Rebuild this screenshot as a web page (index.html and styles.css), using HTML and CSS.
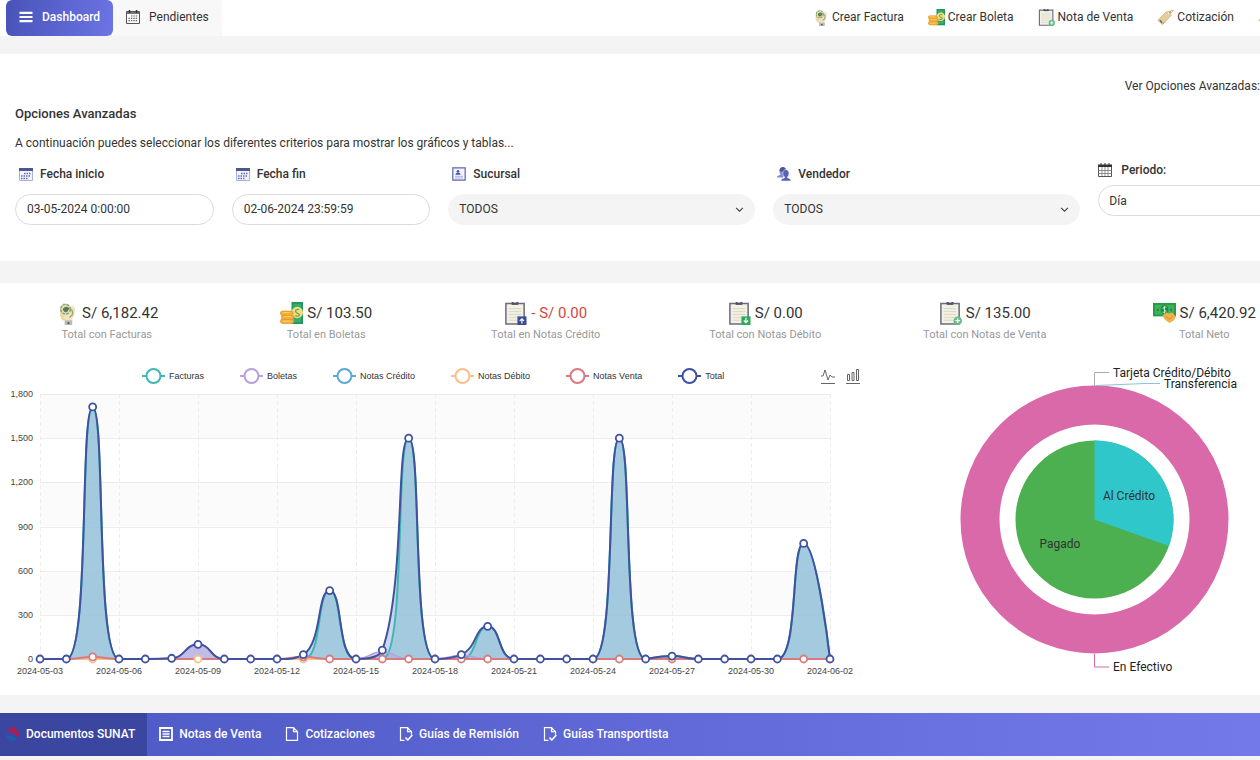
FILE: index.html
```html
<!DOCTYPE html>
<html lang="es">
<head>
<meta charset="utf-8">
<meta name="viewport" content="width=device-width, initial-scale=1">
<title>Dashboard</title>
<link rel="stylesheet" href="styles.css">
</head>
<body>
<svg class="sprite" aria-hidden="true">
  <symbol id="i-factura" viewBox="0 0 24 24">
    <path d="M7 18L5 12 6 4 9 1l3 1 4 3 3-1 2 3-1 7-3 5H9z" fill="#f1e3bd"/>
    <path d="M6 8l-1 6 3 5h3l-2-4z" fill="#efd5a8"/>
    <circle cx="11" cy="7.500" r="5" fill="#dbe5c4" stroke="#8ba06a" stroke-width="1.500" stroke-dasharray="3 1"/>
    <path d="M8 8c1-4 6-4 7-1l-2 3c-1 1-3 1-4-1" fill="#5c7a52"/>
    <path d="M16 7c4 3 3 7-1 9" fill="none" stroke="#a0a67c" stroke-width="1.500"/>
    <path d="M10 19h8v5h-8z" fill="#b9b9b5"/><path d="M13 21h2v2h-2z" fill="#555"/>
  </symbol>
  <symbol id="i-boleta" viewBox="0 0 24 24">
    <path d="M12 0h12v23H12z" fill="#21975b"/><path d="M14 2h8v19h-8z" fill="#38ad6d"/>
    <circle cx="18" cy="11" r="6" fill="#f3dd83"/>
    <path d="M20 8c-3-1-5 1-3 3s4 1 3 3c-1 1-3 1-4 0" fill="none" stroke="#78a854" stroke-width="1.500"/>
    <g fill="#f3b03c" stroke="#df9427" stroke-width=".8"><rect x=".5" y="17.500" width="14" height="5" rx="2.500"/><rect x="1.500" y="13.500" width="13" height="4.500" rx="2"/><rect x=".5" y="9.500" width="13" height="4.500" rx="2"/></g>
    <path d="M3 11h7M4 15h8M3 20h8" stroke="#ffd467"/>
  </symbol>
  <symbol id="i-clip" viewBox="0 0 24 24">
    <path d="M2 1.500h19v21.500H2z" fill="#f3f1e6" stroke="#6b6e7c" stroke-width="1.600"/>
    <path d="M8 0h7v3H8z" fill="#4e5264"/><path d="M10 0h3v1h-3z" fill="#b8bac6"/>
    <path d="M5 7h13M5 10h13M5 13h13M5 16h11M5 19h9" stroke="#d8d5bd"/>
  </symbol>
  <symbol id="i-nota" viewBox="0 0 24 24"><use href="#i-clip"/><circle cx="19.500" cy="19.500" r="4.500" fill="#66bd85"/><path d="M19.500 17v5M17 19.500h5" stroke="#fff" stroke-width="1.300"/></symbol>
  <symbol id="i-credito" viewBox="0 0 24 24"><use href="#i-clip"/><path d="M14 15h9.500v9H14z" fill="#3c4c94"/><path d="M18.700 22.500v-5m-2.200 2.200l2.200-2.200 2.200 2.200" fill="none" stroke="#fff" stroke-width="1.200"/></symbol>
  <symbol id="i-debito" viewBox="0 0 24 24"><use href="#i-clip"/><path d="M14 15h9.500v9H14z" fill="#2fa75c"/><path d="M18.700 16.500v5m-2.200-2.200l2.200 2.200 2.200-2.200" fill="none" stroke="#fff" stroke-width="1.200"/></symbol>
  <symbol id="i-tag" viewBox="0 0 24 24">
    <path d="M1 16L13 4l6-1 1 6L8 22z" fill="#e6cda0" stroke="#cdb184"/><path d="M4 19l4 3 4-4" fill="#c9ae7e"/>
    <circle cx="17" cy="6" r="1.500" fill="#fff"/><path d="M17 6c2-4 4-5 6-4-1 2-3 3-6 4" fill="none" stroke="#a98c61"/>
    <path d="M4 16l3 3" stroke="#76664a" stroke-width="2"/>
  </symbol>
  <symbol id="i-neto" viewBox="0 0 24 24">
    <path d="M0 1h24v14H0z" fill="#28994a"/><path d="M2 3h20v10H2z" fill="#3bb35c"/>
    <ellipse cx="12" cy="8" rx="4" ry="5" fill="#1d8a3e"/><path d="M14 5.500c-3-1-5 1-2 2.500s1 3.500-2 2.500M12 4v8" fill="none" stroke="#c9ecc3"/>
    <path d="M5 7v2M19 7v2" stroke="#1d8a3e" stroke-width="2"/>
    <path d="M10 14l4-3 3 1 3-1 4 4-2 4-5 3-5-4z" fill="#f2b14a"/><path d="M13 15l4 3 4-3" fill="none" stroke="#d98a2b"/>
  </symbol>
  <symbol id="i-cal" viewBox="0 0 14 14">
    <path d="M.5 2.500h13v11H.5z" fill="#fff" stroke="#555"/><path d="M0 1.500h14v2.500H0z" fill="#333"/><path d="M3 0v3M7 0v3M11 0v3" stroke="#333"/>
    <path d="M.5 7.500h13M.5 10.500h13M4 4v9M7 4v9M10 4v9" stroke="#777" stroke-width=".8"/>
  </symbol>
  <symbol id="i-month" viewBox="0 0 14 14">
    <path d="M.5 1.500h13v12H.5z" fill="#fafafa" stroke="#555"/><path d="M1 2h12v2H1z" fill="#777"/><path d="M3.500 0v3M10.500 0v3" stroke="#333" stroke-width="1.500"/>
    <path d="M5 6h7M2.500 8.300h9.500M2.500 10.600h9" stroke="#666" stroke-width="1.200" stroke-dasharray="1.400 1"/>
  </symbol>
  <symbol id="i-date" viewBox="0 0 14 14">
    <path d="M.5 1.500h13v12H.5z" fill="#f4f5fc" stroke="#a9b0dd"/><path d="M0 1h14v3H0z" fill="#4c568f"/>
    <path d="M5 6.500h7M2 9h10M2 11.500h7" stroke="#5c68ba" stroke-width="1.400" stroke-dasharray="1.500 1"/>
  </symbol>
  <symbol id="i-card" viewBox="0 0 14 14">
    <path d="M.8 .8h12.400v12.400H.8z" fill="#f2f4fd" stroke="#5b67aa" stroke-width="1.200"/><circle cx="6" cy="4.300" r="1.300" fill="#4655ab"/><path d="M3.500 7.800c0-3 5-3 5 0z" fill="#4655ab"/><path d="M3 9.300h8M3 11h8" stroke="#aab2e3"/>
  </symbol>
  <symbol id="i-users" viewBox="0 0 14 14">
    <path d="M2.500 3.500c0-4 5-4.500 6-1L7 8l-1 2.500H0C0 8 3 8.500 3.500 7.500 3 7 2.500 5 2.500 3.500z" fill="#7f8cd6"/><path d="M2.500 4c0-5 6-5 6.500-1.500L5.500 5z" fill="#4b5791"/>
    <path d="M5.800 6c0-4.500 6.200-4.500 6.200 0 0 2-.8 3.400-1.800 4.200C10.500 11.500 14 11 14 14H4c0-3 3.500-2.500 3.800-3.800C6.700 9.400 5.800 8 5.800 6z" fill="#5663b7" stroke="#fff" stroke-width=".5"/>
  </symbol>
  <symbol id="i-menu" viewBox="0 0 14 14"><path d="M.5 2.800h13M.5 7h13M.5 11.200h13" stroke="currentColor" stroke-width="2.200"/></symbol>
  <symbol id="i-list" viewBox="0 0 14 14"><path d="M1 1h12v12H1z" fill="none" stroke="currentColor" stroke-width="1.800"/><path d="M3.500 4.500h7M3.500 7h7M3.500 9.500h7" stroke="currentColor" stroke-width="1.300"/></symbol>
  <symbol id="i-file" viewBox="0 0 14 14"><path d="M1.500 .7h7l4 4v8.600h-11zM8.500 .7v4h4" fill="none" stroke="currentColor" stroke-width="1.200"/></symbol>
  <symbol id="i-check" viewBox="0 0 14 14"><path d="M5.500 13.300h-4V.7h7l4 4v3M8.500 .7v4h4" fill="none" stroke="currentColor" stroke-width="1.200"/><path d="M6.500 10.500l2.300 2.500 4.500-5" fill="none" stroke="currentColor" stroke-width="1.600"/></symbol>
  <symbol id="i-sunat" viewBox="0 0 14 14"><path d="M2 3c2-4 7-4 9 0 1 2 3 3 3 6l-3 1c-1-3-3-4-5-4C4 6 3 5 2 3z" fill="#a81f55"/><path d="M0 6c1 3 4 3 6 3 2 1 3 2 5 2-3 5-11 4-11-5z" fill="#1d5fae"/></symbol>
  <symbol id="i-down" viewBox="0 0 8 8"><path d="M1 2.500l3 3 3-3" fill="none" stroke="#444"/></symbol>
  <symbol id="i-line" viewBox="0 0 14 16"><path d="M0 8h2l2-6 3 10 2-5 2 2h3M0 15.500h14" fill="none" stroke="#666"/></symbol>
  <symbol id="i-bars" viewBox="0 0 14 16"><path d="M1.500 6.500h2v6h-2zM6 4.500h2v8H6zM10.500 1.500h2v11h-2zM0 15.500h14" fill="none" stroke="#666"/></symbol>
</svg>

<header class="topbar">
  <nav class="tabs">
    <a class="tab tab-active" href="#"><svg class="icon"><use href="#i-menu"/></svg>Dashboard</a>
    <a class="tab" href="#"><svg class="icon"><use href="#i-month"/></svg>Pendientes</a>
  </nav>
  <nav class="quick">
    <a href="#"><svg class="pic"><use href="#i-factura"/></svg>Crear Factura</a>
    <a href="#"><svg class="pic"><use href="#i-boleta"/></svg>Crear Boleta</a>
    <a href="#"><svg class="pic"><use href="#i-nota"/></svg>Nota de Venta</a>
    <a href="#"><svg class="pic"><use href="#i-tag"/></svg>Cotización</a>
    <a href="#" aria-label="Más opciones"><svg class="pic"><use href="#i-tag"/></svg></a>
  </nav>
</header>

<main>
  <section class="card options">
    <p class="toggle">Ver Opciones Avanzadas:</p>
    <h2>Opciones Avanzadas</h2>
    <p class="hint">A continuación puedes seleccionar los diferentes criterios para mostrar los gráficos y tablas...</p>
    <form class="filters">
      <div class="field"><label for="from"><svg class="icon"><use href="#i-date"/></svg>Fecha inicio</label><input id="from" type="text" value="03-05-2024 0:00:00"></div>
      <div class="field"><label for="to"><svg class="icon"><use href="#i-date"/></svg>Fecha fin</label><input id="to" type="text" value="02-06-2024 23:59:59"></div>
      <div class="field wide"><label for="branch"><svg class="icon"><use href="#i-card"/></svg>Sucursal</label>
        <div class="select"><select id="branch"><option>TODOS</option></select><svg class="arrow"><use href="#i-down"/></svg></div></div>
      <div class="field wide"><label for="seller"><svg class="icon"><use href="#i-users"/></svg>Vendedor</label>
        <div class="select"><select id="seller"><option>TODOS</option></select><svg class="arrow"><use href="#i-down"/></svg></div></div>
      <div class="field period"><label for="period"><svg class="icon"><use href="#i-cal"/></svg>Periodo:</label><select id="period"><option>Día</option></select></div>
    </form>
  </section>

  <section class="card report">
    <div class="stats">
      <div class="stat"><p class="amount"><svg class="pic"><use href="#i-factura"/></svg>S/ 6,182.42</p><p class="caption">Total con Facturas</p></div>
      <div class="stat"><p class="amount"><svg class="pic"><use href="#i-boleta"/></svg>S/ 103.50</p><p class="caption">Total en Boletas</p></div>
      <div class="stat"><p class="amount negative"><svg class="pic"><use href="#i-credito"/></svg>- S/ 0.00</p><p class="caption">Total en Notas Crédito</p></div>
      <div class="stat"><p class="amount"><svg class="pic"><use href="#i-debito"/></svg>S/ 0.00</p><p class="caption">Total con Notas Débito</p></div>
      <div class="stat"><p class="amount"><svg class="pic"><use href="#i-nota"/></svg>S/ 135.00</p><p class="caption">Total con Notas de Venta</p></div>
      <div class="stat"><p class="amount"><svg class="pic"><use href="#i-neto"/></svg>S/ 6,420.92</p><p class="caption">Total Neto</p></div>
    </div>
    <div class="charts">
      <div class="trend">
        <div class="legend-row">
          <ul class="legend" id="legend"></ul>
          <div class="tools">
            <button type="button" aria-label="Líneas"><svg><use href="#i-line"/></svg></button>
            <button type="button" aria-label="Barras"><svg><use href="#i-bars"/></svg></button>
          </div>
        </div>
        <svg class="plot" id="plot" viewBox="0 0 860 300" role="img" aria-label="Ventas por día"></svg>
      </div>
      <svg class="pie" viewBox="0 0 400 340" role="img" aria-label="Formas de pago">
        <circle cx="234.500" cy="169.500" r="114.500" fill="none" stroke="#d969a8" stroke-width="39"/>
        <circle cx="234.500" cy="169.500" r="79" fill="#4caf50"/>
        <path d="M234.500 169.500V90.500A79 79 0 0 1 308.900 196z" fill="#2fc7c9"/>
        <path d="M234.500 36V22.500H249" class="lead" stroke="#aaa"/>
        <path d="M236 35.500L285 33.500H300" class="lead" stroke="#8bc4dc"/>
        <path d="M234.500 304V317H249" class="lead" stroke="#d969a8"/>
        <text x="253" y="27">Tarjeta Crédito/Débito</text>
        <text x="304" y="38">Transferencia</text>
        <text x="253" y="321">En Efectivo</text>
        <text class="slice" x="269" y="150">Al Crédito</text>
        <text class="slice" x="200" y="198">Pagado</text>
      </svg>
    </div>
  </section>
</main>

<nav class="docs">
  <a class="doc doc-active" href="#"><svg class="icon"><use href="#i-sunat"/></svg>Documentos SUNAT</a>
  <a class="doc" href="#"><svg class="icon"><use href="#i-list"/></svg>Notas de Venta</a>
  <a class="doc" href="#"><svg class="icon"><use href="#i-file"/></svg>Cotizaciones</a>
  <a class="doc" href="#"><svg class="icon"><use href="#i-check"/></svg>Guías de Remisión</a>
  <a class="doc" href="#"><svg class="icon"><use href="#i-check"/></svg>Guías Transportista</a>
</nav>
<script src="chart.js"></script>
</body>
</html>
```
FILE: styles.css
```css
* { box-sizing: border-box; }
body { margin: 0; overflow-x: hidden; background: #f4f4f5; color: #333; font: 12px/16px Roboto, "Open Sans", sans-serif; }
h2, p, ul { margin: 0; padding: 0; }
a { color: inherit; text-decoration: none; }
.sprite { position: absolute; width: 0; height: 0; }
.icon { width: 14px; height: 14px; flex: none; }
.pic { width: 17px; height: 17px; flex: none; }

.topbar { display: flex; justify-content: space-between; background: #fff; height: 36px; padding-left: 6px; overflow: hidden; }
.tabs { display: flex; }
.tab { display: flex; align-items: center; gap: 9px; padding: 0 13px 2px; background: #f8f8f8; }
.tab-active { color: #fff; font-weight: 500; background: linear-gradient(100deg, #4853b9, #6d74e4); border-radius: 6px; }
.quick { display: flex; align-items: center; gap: 24px; padding-bottom: 2px; margin-right: -15px; }
.quick a { display: flex; align-items: center; gap: 3px; white-space: nowrap; }

.card { background: #fff; overflow: hidden; }
.options { margin-top: 18px; padding: 24px 0 36px 15px; }
.toggle { text-align: right; }
.options h2 { font-size: 13px; line-height: 20px; font-weight: 500; margin-top: 10px; }
.hint { margin-top: 11px; }
.filters { display: grid; grid-template-columns: repeat(12, 1fr); column-gap: 18px; margin: 15px -37px 0 0; }
.field { grid-column: span 2; }
.wide { grid-column: span 3; }
.field label { display: flex; align-items: center; gap: 7px; font-weight: 500; height: 16px; padding-left: 4px; margin-bottom: 12px; }
.period label { margin: -4px 0 7px -4px; gap: 9px; }
.field input, .field select { display: block; width: 100%; height: 31px; padding: 0 11px 2px; border: 1px solid #dcdcdc; border-radius: 16px; background: #fff; color: #333; font: inherit; appearance: none; }
.period select { padding: 0 10px; }
.select { position: relative; }
.field .select select { background: #f4f4f4; border-color: #f4f4f4; padding: 0 10px 2px; }
.arrow { position: absolute; right: 11px; top: 11px; width: 9px; height: 9px; pointer-events: none; }

.report { margin-top: 22px; padding: 18px 0 5px; }
.stats { display: grid; grid-template-columns: repeat(6, 1fr); margin: 0 -54px 0 -3px; text-align: center; }
.amount { display: flex; justify-content: center; align-items: center; gap: 4px; font-size: 15px; line-height: 24px; }
.amount .pic { width: 23px; height: 23px; }
.negative { color: #d64541; }
.caption { font-size: 11px; line-height: 16px; color: #999; margin-top: 2px; }

.charts { display: grid; grid-template-columns: 43fr 20fr; margin-top: 7px; }
.legend-row { display: flex; justify-content: space-between; padding: 16px 0 0 142px; height: 36px; }
.legend { display: flex; align-items: center; gap: 36px; list-style: none; font: 9px/12px "Liberation Sans", Arial, sans-serif; }
.legend li { display: flex; align-items: center; gap: 4px; white-space: nowrap; }
.legend svg { width: 23px; height: 16px; fill: #fff; stroke-width: 2; }
.tools { display: flex; align-items: center; gap: 11px; }
.tools button { padding: 0; border: 0; background: none; width: 14px; height: 16px; }
.tools svg { display: block; width: 14px; height: 16px; }
.plot, .pie { display: block; width: 100%; height: auto; }
.plot text { font: 9px "Liberation Sans", Arial, sans-serif; fill: #444; }
.grid-line { stroke: #ededf0; fill: none; }
.dashed { stroke-dasharray: 4 3; }
.pie text { font: 12px Roboto, sans-serif; fill: #222; }
.pie .slice { text-anchor: middle; fill: #333; }
.lead { fill: none; }

.docs { display: flex; height: 43px; margin: 18px 0 4px; color: #fff; font-weight: 500; background: linear-gradient(90deg, #4b58c3, #7479ea); }
.doc { display: flex; align-items: center; gap: 6px; padding: 0 12px 2px; white-space: nowrap; }
.doc-active { background: #3a469f; padding: 0 12px 2px 6px; }
```
FILE: chart.js
```js
const DAYS = 31;
const LEFT = 40, RIGHT = 830, BASE = 273, TOP = 8, MAX = 1800;
const sales = { 2: 1700, 11: 465, 14: 1500, 17: 222, 22: 1500, 24: 20, 29: 785 };
const series = [
  { name: "Facturas", color: "#3fb8b4", data: sales, fill: "#8fc3d6" },
  { name: "Boletas", color: "#b6a2de", data: { 5: 5, 6: 100, 13: 50, 16: 25 }, fill: "#b6a2de" },
  { name: "Notas Crédito", color: "#5aa9d8", data: {}, fill: "#5ab1ef" },
  { name: "Notas Débito", color: "#f7c08a", data: {}, fill: "#ffb980" },
  { name: "Notas Venta", color: "#d97a80", data: { 2: 14, 10: 15 }, fill: "#ffb08a" },
  { name: "Total", color: "#3f519f", data: { 2: 1712, 5: 5, 6: 100, 10: 30, 11: 465, 13: 60, 14: 1500, 16: 30, 17: 222, 22: 1500, 24: 20, 29: 785 }, fill: "#a0b4e2" }
];

const xAt = i => LEFT + (RIGHT - LEFT) * i / (DAYS - 1);
const yAt = v => BASE - (BASE - TOP) * v / MAX;
const clamp = (v, a, b) => Math.max(Math.min(a, b), Math.min(Math.max(a, b), v));
const dist = (a, b) => Math.hypot(a[0] - b[0], a[1] - b[1]);

// Smooth curve whose control points stay inside each segment's bounds.
function curve(points) {
  let out = `M${points[0]}`, cp = points[0];
  for (let i = 1; i < points.length; i++) {
    const prev = points[i - 1], p = points[i], next = points[i + 1];
    if (!next) { out += `C${cp} ${p} ${p}`; break; }
    const d0 = dist(prev, p), d1 = dist(p, next), r = d1 / (d0 + d1);
    let after = [0, 1].map(k => clamp(p[k] + (next[k] - prev[k]) * 0.5 * r, p[k], next[k]));
    const before = [0, 1].map(k => clamp(p[k] - (after[k] - p[k]) * d0 / d1, prev[k], p[k]));
    after = [0, 1].map(k => p[k] + (p[k] - before[k]) * d1 / d0);
    out += `C${cp} ${before} ${p}`;
    cp = after;
  }
  return out;
}

let art = "";
for (let n = 0; n <= 6; n++) {
  const y = Math.round(yAt(n * 300)) + 0.5;
  if (n % 2) art += `<rect x="${LEFT}" y="${yAt((n + 1) * 300)}" width="${RIGHT - LEFT}" height="44" fill="#fbfbfc"/>`;
  art += `<path class="grid-line" d="M${LEFT} ${y}H${RIGHT}"/><text x="33" y="${y + 2}" text-anchor="end">${(n * 300).toLocaleString("en-US")}</text>`;
}
for (let i = 0; i < DAYS; i += 3) {
  const day = new Date(Date.UTC(2024, 4, 3 + i)).toISOString().slice(0, 10);
  art += `<path class="grid-line dashed" d="M${Math.round(xAt(i)) + 0.5} ${TOP}V${BASE}"/><text x="${xAt(i)}" y="288" text-anchor="middle">${day}</text>`;
}
const shapes = series.map(s => {
  const points = Array.from({ length: DAYS }, (_, i) => [xAt(i), yAt(s.data[i] || 0)]);
  return { ...s, points, d: curve(points) };
});
const area = (s, opacity) => `<path d="${s.d}L${RIGHT} ${BASE}L${LEFT} ${BASE}Z" fill="${s.fill}" fill-opacity="${opacity}"/>`;
art += area(shapes[5], 0.55) + area(shapes[0], 0.65) + area(shapes[1], 0.5) + area(shapes[4], 0.6);
shapes.forEach(s => { art += `<path d="${s.d}" fill="none" stroke="${s.color}" stroke-width="${s.name === "Boletas" ? 1.500 : 2}"/>`; });
const dot = (p, color) => `<circle cx="${p[0]}" cy="${p[1]}" r="3.500" fill="#fff" stroke="${color}" stroke-width="1.800"/>`;
[2, 6, 10].forEach(i => { art += dot(shapes[3].points[i], "#f7c08a"); });
[2, 10, 11, 13, 14, 16, 17, 22, 24, 29].forEach(i => { art += dot(shapes[4].points[i], "#d97a80"); });
shapes[5].points.forEach(p => { art += dot(p, "#3f519f"); });
document.getElementById("plot").innerHTML = art;

document.getElementById("legend").innerHTML = series.map(s =>
  `<li><svg viewBox="0 0 23 16" stroke="${s.color}"><path d="M0 8h23"/><circle cx="11.500" cy="8" r="7"/></svg>${s.name}</li>`).join("");
```
